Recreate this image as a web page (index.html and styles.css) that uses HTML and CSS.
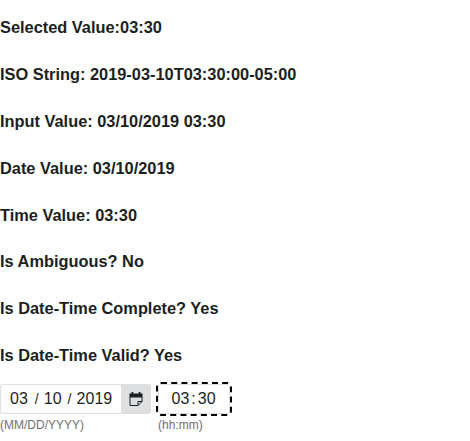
FILE: index.html
```
<!DOCTYPE html>
<html lang="en">
<head>
<meta charset="utf-8">
<title>Date-Time Input</title>
<link rel="stylesheet" href="styles.css">
</head>
<body>
<h3>Selected Value:03:30</h3>
<h3>ISO String: 2019-03-10T03:30:00-05:00</h3>
<h3>Input Value: 03/10/2019 03:30</h3>
<h3>Date Value: 03/10/2019</h3>
<h3>Time Value: 03:30</h3>
<h3>Is Ambiguous? No</h3>
<h3>Is Date-Time Complete? Yes</h3>
<h3>Is Date-Time Valid? Yes</h3>
<div class="fields">
  <div class="field">
    <div class="date-control">
      <div class="date-input"><span>03</span><span class="slash">/</span><span>10</span><span class="slash year-slash">/</span><span>2019</span></div>
      <button class="calendar" aria-label="Calendar"><svg viewBox="0 0 14 14" width="14" height="14"><path d="M.5 1.5H2.5V0H4.3v1.5h5.4V0h1.8v1.5h2V5.5H.5z" fill="#1c1f21"/><path d="M1 5v8.5H9L13 9.5V5M9 13.5V9.5H13" fill="none" stroke="#1c1f21"/></svg></button>
    </div>
    <div class="mask">(MM/DD/YYYY)</div>
  </div>
  <div class="field">
    <div class="time-input"><span>03</span><span class="colon">:</span><span>30</span></div>
    <div class="mask">(hh:mm)</div>
  </div>
</div>
</body>
</html>
```
FILE: styles.css
```
body { margin: 0; padding-top: 15.4px; font: 16px/24px "Liberation Sans", Arial, sans-serif; color: #1c1f21; background: #fff; }
h3 { margin: 0 0 22.82px; font-size: 16.38px; line-height: 24px; font-weight: 700; }
.fields { display: flex; gap: 7px; margin-top: -5.9px; }
.date-control { display: flex; width: 151px; height: 30px; }
.date-input { box-sizing: border-box; display: flex; align-items: center; width: 121px; height: 30px; padding-left: 9px; border: 1px solid #dedfe0; border-right: 0; border-radius: 3px 0 0 3px; }
.slash { width: 4px; margin: 0 5px 0 7px; font-size: 14px; }
.year-slash { margin-left: 6px; }
.calendar { display: flex; align-items: center; justify-content: center; width: 30px; height: 30px; padding: 0; border: 0; border-radius: 0 3px 3px 0; background: #dedfe0; }
.time-input { box-sizing: border-box; display: flex; align-items: center; width: 72px; height: 30px; padding-left: 12.5px; border: 1px solid #dedfe0; border-radius: 3px; outline: 2px dashed #000; }
.colon { margin: 0 2px; }
.mask { margin-top: 4px; font-size: 12px; line-height: 14px; color: #707070; }
```
